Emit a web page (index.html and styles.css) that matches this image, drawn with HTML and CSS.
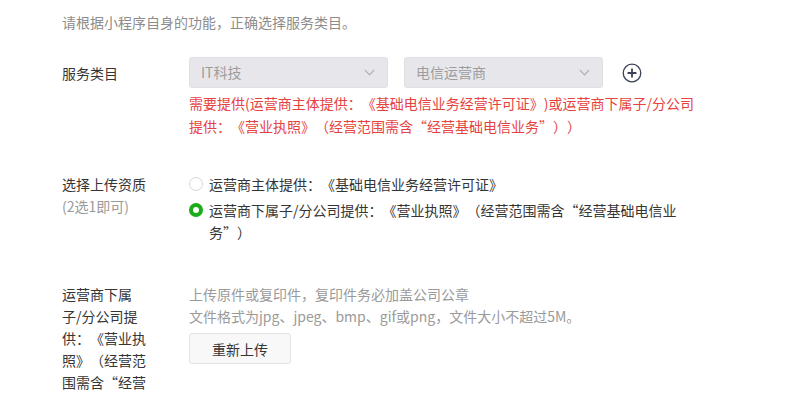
FILE: index.html
```html
<!DOCTYPE html>
<html>
<head>
    <title>服务类目</title>
    <link rel="stylesheet" href="styles.css">
</head>
<body>
    <div class="page">
        <p class="intro">请根据小程序自身的功能，正确选择服务类目。</p>

        <div class="row">
            <div class="label">服务类目</div>
            <div class="field">
                <div class="selects">
                    <div class="select">IT科技<span class="arrow"></span></div>
                    <div class="select">电信运营商<span class="arrow"></span></div>
                    <svg class="add" width="20" height="20" viewBox="0 0 20 20">
                        <circle cx="10" cy="10" r="8.8" fill="none" stroke="#3a4256" stroke-width="1.3"/>
                        <path d="M10 5.6v8.8M5.6 10h8.8" stroke="#3a4256" stroke-width="1.8"/>
                    </svg>
                </div>
                <p class="tips">需要提供(运营商主体提供：《基础电信业务经营许可证》)或运营商下属子/分公司提供：《营业执照》（经营范围需含“经营基础电信业务”））</p>
            </div>
        </div>

        <div class="row row-radio">
            <div class="label">选择上传资质<span class="sub">(2选1即可)</span></div>
            <div class="field">
                <label class="radio">
                    <span class="dot"></span>
                    <span class="radio-text">运营商主体提供：《基础电信业务经营许可证》</span>
                </label>
                <label class="radio">
                    <span class="dot checked"></span>
                    <span class="radio-text">运营商下属子/分公司提供：《营业执照》（经营范围需含“经营基础电信业务”）</span>
                </label>
            </div>
        </div>

        <div class="row row-upload">
            <div class="label">运营商下属子/分公司提供：《营业执照》（经营范围需含“经营</div>
            <div class="field">
                <p class="hint">上传原件或复印件，复印件务必加盖公司公章</p>
                <p class="hint">文件格式为jpg、jpeg、bmp、gif或png，文件大小不超过5M。</p>
                <button class="btn">重新上传</button>
            </div>
        </div>
    </div>
</body>
</html>
```

FILE: styles.css
```css
body {
    margin: 0;
    background-color: #fff;
    font-family: "Microsoft YaHei", "Noto Sans CJK SC", "Noto Sans", sans-serif;
    font-size: 14px;
    color: #353535;
    text-spacing-trim: space-all;
    overflow: hidden;
}
p {
    margin: 0;
}
.page {
    padding: 11px 0 0 62px;
}
.intro {
    color: #8d8d8d;
    line-height: 22px;
    margin-bottom: 24px;
}
.row {
    display: flex;
    gap: 41px;
}
.label {
    width: 86px;
    flex-shrink: 0;
    line-height: 22px;
    padding-top: 5px;
}
.label .sub {
    display: block;
    color: #9a9a9a;
}
.selects {
    display: flex;
    align-items: center;
    gap: 16px;
}
.select {
    position: relative;
    box-sizing: border-box;
    width: 199px;
    height: 31px;
    line-height: 29px;
    padding-left: 11px;
    background-color: #e7e7eb;
    border: 1px solid #e0e0e4;
    border-radius: 3px;
    color: #9d9d9d;
}
.arrow {
    position: absolute;
    right: 14px;
    top: 9px;
    width: 6px;
    height: 6px;
    border-right: 1.3px solid #a8a8ad;
    border-bottom: 1.3px solid #a8a8ad;
    transform: rotate(45deg);
}
.add {
    margin-left: 3px;
}
.tips {
    width: 512px;
    color: #e64340;
    line-height: 23px;
    margin-top: 4px;
}
.row-radio {
    margin-top: 35px;
}
.row-radio .label {
    padding-top: 0;
}
.radio {
    display: flex;
    align-items: flex-start;
    gap: 6px;
    line-height: 22px;
    margin-bottom: 4px;
}
.dot {
    box-sizing: border-box;
    width: 14px;
    height: 14px;
    margin-top: 4px;
    border: 1px solid #d6d6d6;
    border-radius: 50%;
    flex-shrink: 0;
}
.dot.checked {
    border: 4px solid #1aad19;
}
.radio-text {
    width: 478px;
}
.row-upload {
    margin-top: 36px;
}
.row-upload .label {
    padding-top: 0;
}
.hint {
    color: #9a9a9a;
    line-height: 22px;
}
.btn {
    margin-top: 6px;
    width: 102px;
    height: 31px;
    background-color: #f8f8f8;
    border: 1px solid #e3e3e3;
    border-radius: 3px;
    font-family: inherit;
    font-size: 14px;
    color: #353535;
}
```
